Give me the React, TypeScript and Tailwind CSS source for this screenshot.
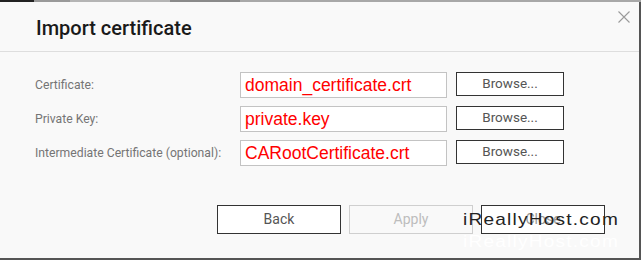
import React from "react";

const ROWS = [
  { label: "Certificate:", file: "domain_certificate.crt" },
  { label: "Private Key:", file: "private.key" },
  { label: "Intermediate Certificate (optional):", file: "CARootCertificate.crt" },
];

function CloseIcon() {
  return (
    <svg width="12" height="12" viewBox="0 0 12 12" aria-hidden="true">
      <path d="M0.5 0.5 L11.5 11.5 M11.5 0.5 L0.5 11.5" stroke="#9a9a9a" strokeWidth="1.1" fill="none" />
    </svg>
  );
}

export default function App() {
  return (
    <div className="relative flex h-[260px] w-[641px] flex-col overflow-hidden bg-[#555]">
      {/* page behind the dialog, only a sliver shows */}
      <div className="flex h-[2px] w-full">
        <div className="w-[34px] bg-[#222]" />
        <div className="w-[36px] bg-[#9a9a9a]" />
        <div className="w-[100px] bg-[#b5b5b5]" />
        <div className="w-[70px] bg-[#8a8a8a]" />
        <div className="flex-1 bg-[#a8a8a8]" />
      </div>

      <div className="flex h-[256px] w-[639px] flex-col bg-[#f9f9f9] font-['Roboto',sans-serif]">
        <div className="flex h-[50px] items-start justify-between border-b border-[#dedede]">
          <h1 className="pl-[36px] pt-[14px] text-[20px] font-medium leading-[24px] text-[#1a1a1a]">
            Import certificate
          </h1>
          <div className="mr-[9px] mt-[9px]">
            <CloseIcon />
          </div>
        </div>

        <div className="flex flex-col gap-[8px] pt-[20px]">
          {ROWS.map((row) => (
            <div key={row.label} className="flex items-start">
              <div className="flex h-[26px] w-[240px] items-center pl-[35px] text-[12.2px] text-[#757575]">
                {row.label}
              </div>
              <div className="flex h-[26px] w-[207px] items-center border border-[#c3c3c3] bg-white pl-[4px] font-['Liberation_Sans',Arial,sans-serif] text-[17.5px] text-[#ff0000]">
                {row.file}
              </div>
              <button
                type="button"
                className="ml-[9px] h-[24px] w-[108px] border border-[#333] bg-white text-[13.5px] leading-none text-[#555]"
              >
                Browse...
              </button>
            </div>
          ))}
        </div>

        <div className="mt-[39px] flex justify-end gap-[8px] pr-[34px]">
          <button
            type="button"
            className="h-[29px] w-[124px] border border-[#333] bg-white text-[14px] text-[#555]"
          >
            Back
          </button>
          <button
            type="button"
            className="h-[29px] w-[124px] border border-[#cfcfcf] bg-[#f9f9f9] text-[14px] text-[#bdbdbd]"
          >
            Apply
          </button>
          <button
            type="button"
            className="h-[29px] w-[124px] border border-[#333] bg-white text-[14px] text-[#999]"
          >
            Close
          </button>
        </div>
      </div>

      {/* watermark overlay */}
      <div className="pointer-events-none absolute left-[463px] top-[210px] origin-left scale-x-[1.12] font-['Liberation_Sans',Arial,sans-serif] text-[17px] leading-[20px] tracking-[1.1px] text-[#222]">
        iReallyHost.com
      </div>
      <div className="pointer-events-none absolute left-[463px] top-[232px] origin-left scale-x-[1.12] font-['Liberation_Sans',Arial,sans-serif] text-[17px] leading-[20px] tracking-[1.1px] text-white">
        iReallyHost.com
      </div>
    </div>
  );
}
